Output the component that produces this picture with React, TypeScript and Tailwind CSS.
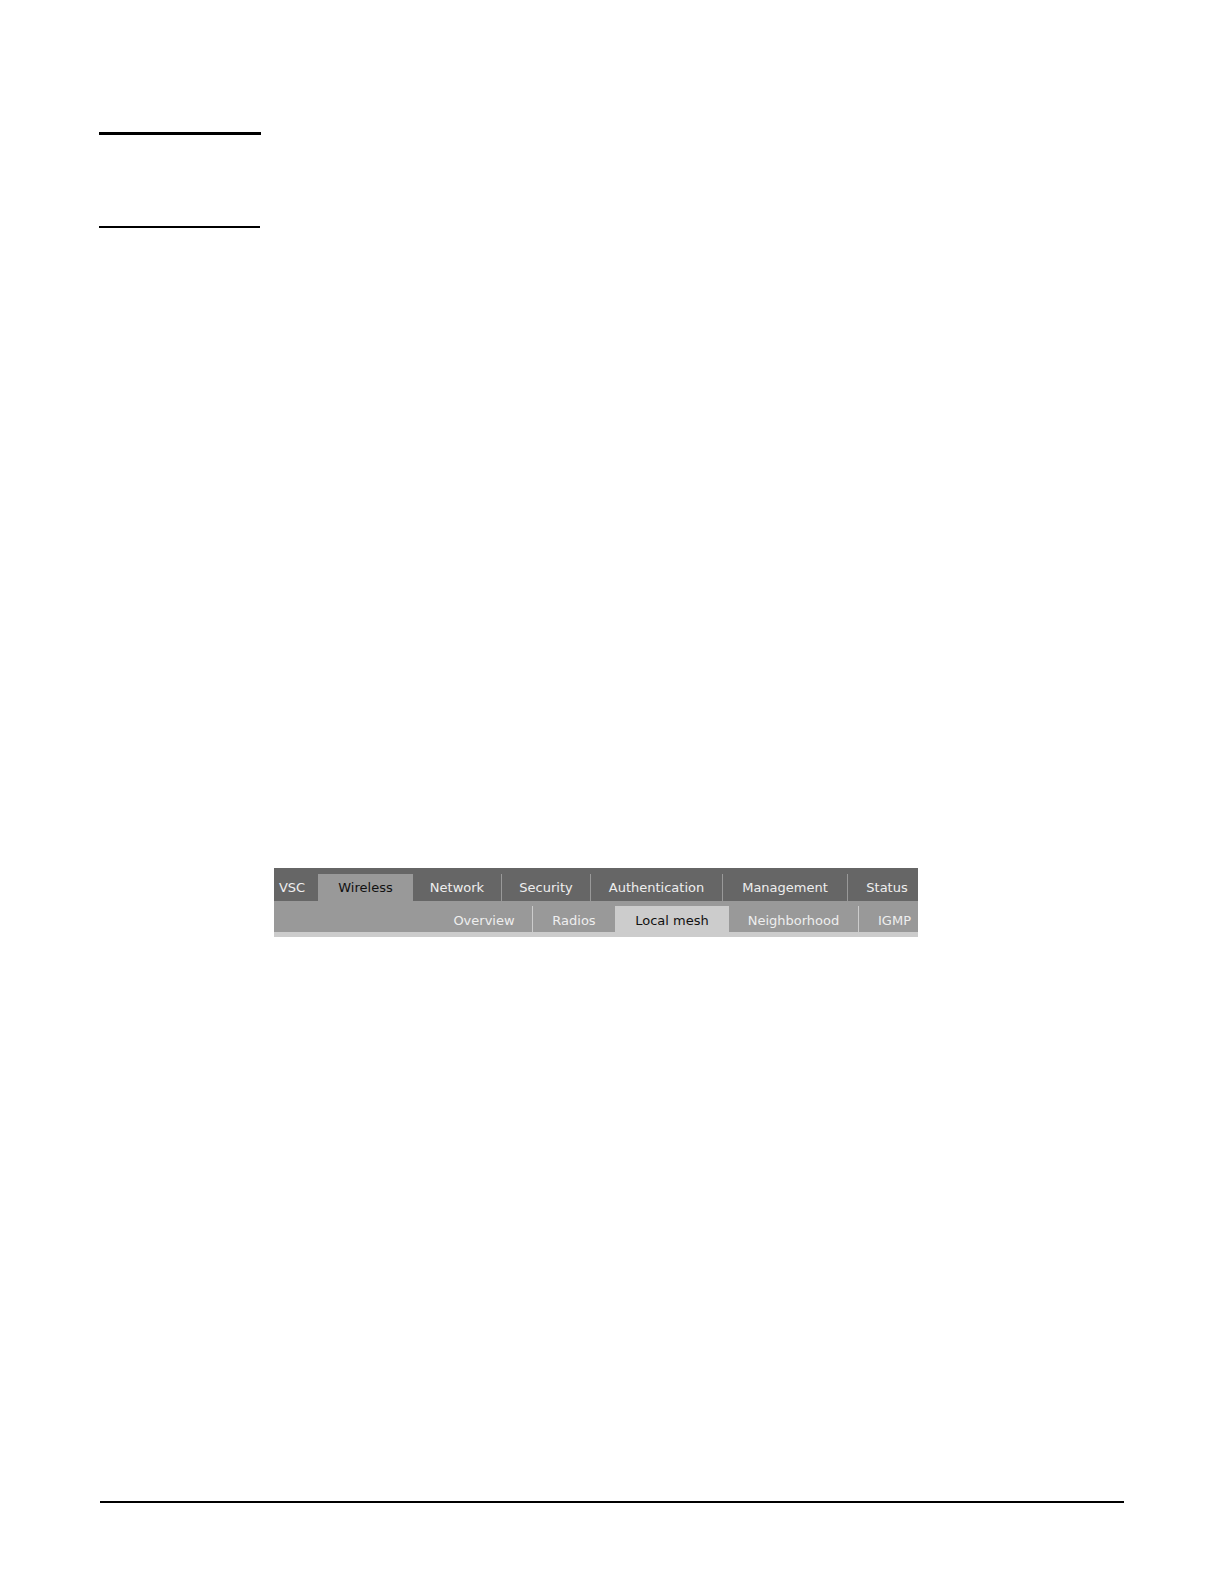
import { FC } from "react";
import clsx from "clsx";

interface Tab {
	label: string;
	size: string;
	divider?: boolean;
	active?: boolean;
}

const mainTabs: Tab[] = [
	{ label: "VSC", size: "w-[44px] pr-2" },
	{ label: "Wireless", size: "w-[95px]", active: true },
	{ label: "Network", size: "w-[88px]" },
	{ label: "Security", size: "w-[89px]", divider: true },
	{ label: "Authentication", size: "w-[132px]", divider: true },
	{ label: "Management", size: "w-[125px]", divider: true },
	{ label: "Status", size: "grow pl-2", divider: true },
];

const subTabs: Tab[] = [
	{ label: "Overview", size: "w-[96px]" },
	{ label: "Radios", size: "w-[83px]", divider: true },
	{ label: "Local mesh", size: "w-[114px]", active: true },
	{ label: "Neighborhood", size: "w-[129px]" },
	{ label: "IGMP", size: "w-[60px] pl-3", divider: true },
];

const App: FC = () => {
	return (
		<main className="bg-white min-h-screen flex flex-col pt-[132px] pb-[81px] pl-[99px] pr-[100px] font-['DejaVu_Sans',Verdana,sans-serif] text-[13px]">
			<header className="w-[162px]">
				<hr className="border-0 h-[3px] bg-black" />
				<hr className="border-0 h-[2px] bg-black mt-[91px] mr-px" />
			</header>
			<div className="mt-[640px] ml-[175px] max-w-[644px]">
				<nav
					aria-label="Main"
					className="flex h-[33px] pt-1.5 bg-[#666666] text-[#eeeeee]"
				>
					{mainTabs.map((tab) => (
						<a
							key={tab.label}
							href="#"
							className={clsx(
								"flex items-center justify-center whitespace-nowrap",
								tab.size,
								tab.divider && "border-l border-[#999999]",
								tab.active && "bg-[#999999] text-[#111111]"
							)}
						>
							{tab.label}
						</a>
					))}
				</nav>
				<nav
					aria-label="Wireless"
					className="flex justify-end h-9 pt-[5px] bg-[#999999] border-b-[5px] border-[#cccccc] text-[#eeeeee]"
				>
					{subTabs.map((tab) => (
						<a
							key={tab.label}
							href="#"
							className={clsx(
								"flex items-center justify-center whitespace-nowrap pt-1",
								tab.size,
								tab.divider && "border-l border-[#cccccc]",
								tab.active && "bg-[#cccccc] text-[#111111]"
							)}
						>
							{tab.label}
						</a>
					))}
				</nav>
			</div>
			<footer className="mt-auto pl-px">
				<hr className="border-0 h-[2px] bg-black" />
			</footer>
		</main>
	);
};
export default App;
